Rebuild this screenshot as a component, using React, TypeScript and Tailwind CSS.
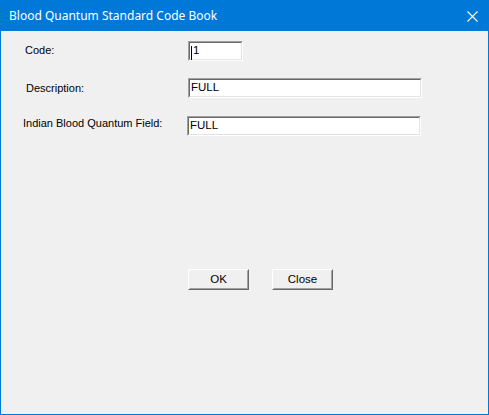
import React from 'react';

const font = { fontFamily: '"Liberation Sans", Arial, sans-serif' };

function Field({ width, children }: { width: string; children?: React.ReactNode }) {
    return (
        <div className={`${width} h-[20px] border-t border-l border-[#a0a0a0] border-r-white border-b-white border-r border-b`}>
            <div className="h-full border-t border-l border-[#696969] border-r border-b border-r-[#e3e3e3] border-b-[#e3e3e3] bg-white pl-[1px] flex items-center text-[11.5px] text-black leading-none">
                {children}
            </div>
        </div>
    );
}

function Button({ label }: { label: string }) {
    return (
        <div className="w-[61px] h-[21px] border-t border-l border-white border-r border-b border-r-[#696969] border-b-[#696969]">
            <div className="h-full border-t border-l border-[#f0f0f0] border-r border-b border-r-[#a0a0a0] border-b-[#a0a0a0] bg-[#f0f0f0] flex items-center justify-center text-[11.5px] text-black leading-none">
                {label}
            </div>
        </div>
    );
}

export default function App() {
    return (
        <div className="w-[489px] h-[415px] border border-[#0078d7] flex flex-col bg-[#f0f0f0]" style={font}>
            <div className="h-[30px] bg-[#0078d7] flex items-center justify-between pl-[8px] pr-[10px] text-white">
                <span className="text-[12px] leading-none pb-[1px]" style={{ fontFamily: '"Noto Sans", "Open Sans", sans-serif' }}>
                    Blood Quantum Standard Code Book
                </span>
                <svg width="11" height="11" viewBox="0 0 11 11" className="mt-[1px]">
                    <path d="M0.5 0.5 L10.5 10.5 M10.5 0.5 L0.5 10.5" stroke="white" strokeWidth="1.1" />
                </svg>
            </div>
            <div className="flex-1 flex flex-col text-[11px] text-black">
                <div className="flex items-start mt-[10px]">
                    <div className="w-[187px] pl-[24px] pt-[2px] leading-[14px]">Code:</div>
                    <Field width="w-[55px]">
                        <span className="border-l border-black h-[14px] mt-[3px]" />
                        <span className="pl-[1px]">1</span>
                    </Field>
                </div>
                <div className="flex items-start mt-[17px]">
                    <div className="w-[187px] pl-[25px] pt-[3px] leading-[14px]">Description:</div>
                    <Field width="w-[234px]">FULL</Field>
                </div>
                <div className="flex items-start mt-[18px]">
                    <div className="w-[186px] pl-[22px] pt-[0px] leading-[14px]">Indian Blood Quantum Field:</div>
                    <Field width="w-[234px]">FULL</Field>
                </div>
                <div className="flex gap-[23px] pl-[187px] mt-[133px]">
                    <Button label="OK" />
                    <Button label="Close" />
                </div>
            </div>
        </div>
    );
}
